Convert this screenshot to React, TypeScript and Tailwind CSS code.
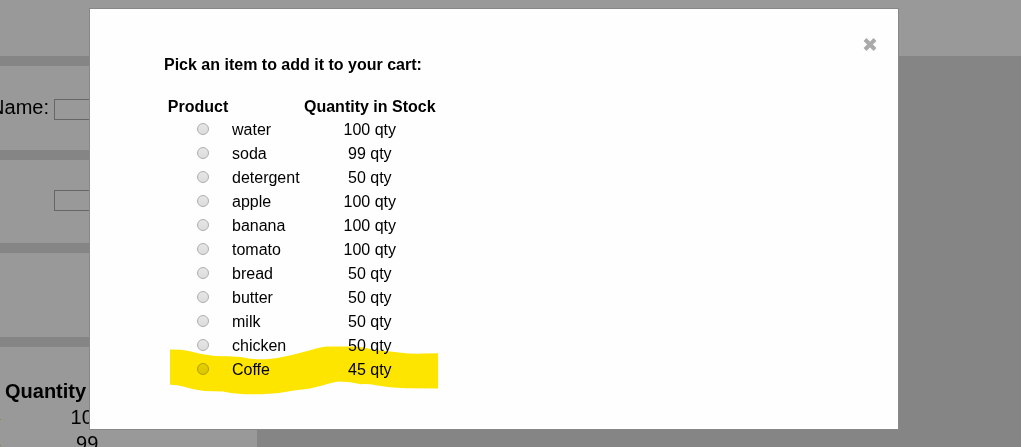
const products = [
  { name: "water", quantity: 100 },
  { name: "soda", quantity: 99 },
  { name: "detergent", quantity: 50 },
  { name: "apple", quantity: 100 },
  { name: "banana", quantity: 100 },
  { name: "tomato", quantity: 100 },
  { name: "bread", quantity: 50 },
  { name: "butter", quantity: 50 },
  { name: "milk", quantity: 50 },
  { name: "chicken", quantity: 50 },
  { name: "Coffe", quantity: 45 },
];

const fieldClass =
  "h-[21px] w-[170px] shrink-0 border border-[#666] bg-transparent px-1 text-sm outline-none";

function Backdrop() {
  return (
    <div className="flex h-full flex-col gap-[10px] overflow-hidden bg-[#858585] text-xl">
      <header className="h-14 shrink-0 bg-[#999]" />
      <section className="flex h-21 w-[257px] shrink-0 items-start gap-[5px] overflow-hidden bg-[#999] pt-[33px]">
        <label htmlFor="item-name" className="flex w-[49px] shrink-0 justify-end leading-4">
          Name:
        </label>
        <input id="item-name" type="text" className={fieldClass} />
      </section>
      <section className="flex h-[83px] w-[257px] shrink-0 items-start overflow-hidden bg-[#999] pt-[30px] pl-[54px]">
        <input aria-label="Item quantity" type="text" className={fieldClass} />
      </section>
      <section className="h-21 w-[257px] shrink-0 bg-[#999]" />
      <section className="w-[257px] shrink-0 overflow-hidden bg-[#999] pt-[31px]">
        <table className="border-collapse text-center leading-[26px]">
          <thead>
            <tr>
              <th className="w-[5px] p-0" />
              <th className="p-0 font-bold">Quantity in Stock</th>
            </tr>
          </thead>
          <tbody>
            {products.map((product) => (
              <tr key={product.name}>
                <td className="p-0">
                  <span className="mt-1 block size-px bg-[#a67c33]" />
                </td>
                <td className="p-0">{product.quantity}</td>
              </tr>
            ))}
          </tbody>
        </table>
      </section>
    </div>
  );
}

function Highlight() {
  return (
    <svg
      aria-hidden="true"
      viewBox="170 346 268 50"
      className="pointer-events-none absolute -bottom-[14px] left-[6px] h-[50px] w-[268px] mix-blend-multiply"
    >
      <path
        fill="#ffe600"
        d="M170 349.6 L181 349.7 Q186 350 191 351.6 Q202 355 215 356 Q229 356 241 357 Q254 360 266 359.2 Q280 358 292 355 L311 350 Q322 347 327 346.6 L354 346.6 Q364 347 374 350 Q385 351 399 352.4 Q411 354 422 353.6 L438 353.2 V388.4 L405 388.2 Q389 387.5 376 385.2 Q369 383.8 361 384.2 Q350 381.5 339 381.5 Q333 382 324 385 Q311 389 294 390.5 Q278 394 262 394.2 L245 394.2 Q232 393.5 223 391.5 L204 391 Q193 389.6 184 386.7 Q177 384.7 170 384.8 Z"
      />
    </svg>
  );
}

export default function App() {
  return (
    <div className="relative h-screen overflow-hidden bg-[#858585] font-['Liberation_Sans',Arial,sans-serif] text-black">
      <Backdrop />
      <div className="absolute inset-0 pt-2 pr-[122px] pl-[89px]">
        <div
          role="dialog"
          aria-modal="true"
          aria-labelledby="dialog-title"
          className="flex items-start justify-between border border-[#888] bg-[#fefefe] pt-[44px] pr-5 pb-[47px] pl-[74px]"
        >
          <form>
            <h2 id="dialog-title" className="mb-[18px] text-base leading-6 font-bold">
              Pick an item to add it to your cart:
            </h2>
            <div className="relative w-fit">
              <table className="border-collapse text-base leading-6">
                <thead>
                  <tr className="leading-[23px]">
                    <th className="w-[68px] p-0 text-center font-bold">Product</th>
                    <th className="w-[72px] p-0" />
                    <th className="p-0 text-center font-bold">Quantity in Stock</th>
                  </tr>
                </thead>
                <tbody>
                  {products.map((product) => (
                    <tr key={product.name}>
                      <td className="p-0 pb-[2px]">
                        <input
                          id={`product-${product.name}`}
                          type="radio"
                          name="product"
                          value={product.name}
                          className="ml-[33px] block size-3 appearance-none rounded-full border border-[#b0b0b0] bg-linear-to-b from-[#e6e6e6] to-[#dcdcdc] checked:bg-[#666]"
                        />
                      </td>
                      <td className="p-0">
                        <label htmlFor={`product-${product.name}`}>{product.name}</label>
                      </td>
                      <td className="p-0 text-center">{product.quantity} qty</td>
                    </tr>
                  ))}
                </tbody>
              </table>
              <Highlight />
            </div>
          </form>
          <button
            type="button"
            aria-label="Close"
            className="-mt-4 flex size-4 cursor-pointer items-center justify-center text-[#aaa]"
          >
            <svg aria-hidden="true" viewBox="0 0 16 16" className="size-4">
              <path d="M3 2.5 L13 12.5 M13 2.5 L3 12.5" stroke="currentColor" strokeWidth="4" />
            </svg>
          </button>
        </div>
      </div>
    </div>
  );
}
